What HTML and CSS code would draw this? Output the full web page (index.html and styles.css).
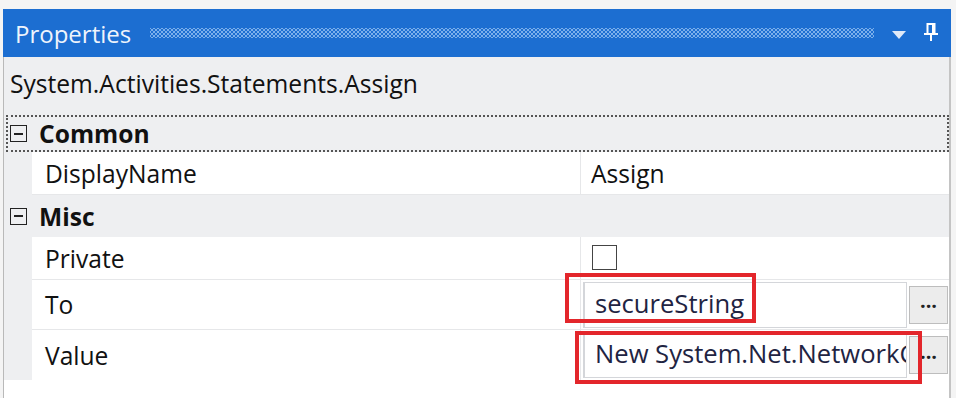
FILE: index.html
```html
<!DOCTYPE html>
<html lang="en">
<head>
    <meta charset="UTF-8">
    <title>Properties</title>
    <link rel="stylesheet" href="styles.css">
</head>
<body>

    <div class="window">
        <!-- Title bar -->
        <div class="titlebar">
            <span class="title">Properties</span>
            <span class="grip"></span>
            <svg class="tb-icon arrow" width="14" height="9" viewBox="0 0 14 9">
                <polygon points="0,0 14,0 7,8" fill="#dfe9f7"/>
            </svg>
            <svg class="tb-icon pin" width="16" height="18" viewBox="0 0 16 18">
                <path d="M4.5 1 H11.5 V11 H4.5 Z" fill="none" stroke="#fff" stroke-width="2"/>
                <rect x="9" y="1" width="2.5" height="10" fill="#fff"/>
                <rect x="1" y="10" width="14" height="2" fill="#fff"/>
                <rect x="7" y="11" width="2" height="7" fill="#fff"/>
            </svg>
        </div>

        <div class="body">
            <div class="typename">System.Activities.Statements.Assign</div>

            <!-- Common -->
            <div class="category focused">
                <span class="toggle"></span>
                <span class="cat-name">Common</span>
            </div>
            <div class="prop">
                <div class="name">DisplayName</div>
                <div class="value">Assign</div>
            </div>

            <!-- Misc -->
            <div class="category">
                <span class="toggle"></span>
                <span class="cat-name">Misc</span>
            </div>
            <div class="prop">
                <div class="name">Private</div>
                <div class="value"><span class="checkbox"></span></div>
            </div>
            <div class="prop tall">
                <div class="name">To</div>
                <div class="value editor">
                    <div class="textbox">secureString</div>
                    <button class="dots">...</button>
                    <div class="mark mark-to"></div>
                </div>
            </div>
            <div class="prop tall last">
                <div class="name">Value</div>
                <div class="value editor">
                    <div class="textbox">New System.Net.NetworkCredential</div>
                    <button class="dots">...</button>
                    <div class="mark mark-value"></div>
                </div>
            </div>

            <div class="footer"></div>
        </div>
    </div>

</body>
</html>
```

FILE: styles.css
```css
body {
    margin: 0;
    background-color: #f4f4f4;
    font-family: "Open Sans", "Noto Sans", sans-serif;
    font-size: 24.6px;
    color: #111;
}

.window {
    margin: 9px 0 0 3px;
    width: 948px;
}

/* Title bar */
.titlebar {
    background-color: #1c6ed1;
    height: 48px;
    display: flex;
    align-items: center;
    padding: 0 12px 0 12px;
}

.title {
    color: #eef4fc;
    font-size: 24px;
    width: 135px;
}

.grip {
    flex: 1;
    height: 10px;
    margin-right: 18px;
    background-image:
        radial-gradient(circle, rgba(160, 200, 245, 0.75) 0.7px, transparent 0.9px),
        radial-gradient(circle, rgba(160, 200, 245, 0.75) 0.7px, transparent 0.9px);
    background-size: 4px 4px;
    background-position: 0 0, 2px 2px;
}

.tb-icon {
    display: block;
}

.arrow {
    margin: 4px 17px 0 0;
}

.pin {
    margin-top: -2px;
}

/* Body */
.body {
    background-color: #eeeff1;
    border-left: 1px solid #b9b9b9;
    border-right: 2px solid #c4c4c4;
}

.typename {
    height: 58px;
    line-height: 54px;
    padding-left: 6px;
}

.category {
    height: 37px;
    display: flex;
    align-items: center;
    box-sizing: border-box;
    padding-left: 2px;
    border: 2px dotted transparent;
    margin-left: 2px;
}

.category.focused {
    border-color: #555;
}

.category:not(.focused) {
    height: 42px;
}

.toggle {
    width: 15px;
    height: 15px;
    border: 1.5px solid #222;
    position: relative;
    margin-right: 12px;
}

.toggle::after {
    content: "";
    position: absolute;
    left: 3px;
    right: 3px;
    top: 6.5px;
    height: 2px;
    background-color: #222;
}

.cat-name {
    font-weight: bold;
}

/* Property rows */
.prop {
    margin-left: 28px;
    background-color: #fff;
    display: grid;
    grid-template-columns: 548px 1fr;
    box-sizing: border-box;
    height: 43px;
    border-bottom: 1px solid #e6e7e9;
}

.prop.tall {
    height: 50px;
}

.prop.last {
    border-bottom: none;
}

.name {
    padding-left: 13px;
    display: flex;
    align-items: center;
}

.value {
    border-left: 1px solid #e6e7e9;
    display: flex;
    align-items: center;
    padding-left: 10px;
}

.checkbox {
    width: 23px;
    height: 23px;
    border: 1.5px solid #444;
    margin: 0 0 2px 1px;
}

.editor {
    padding-left: 2px;
    position: relative;
    color: #1f2442;
    font-size: 25.6px;
}

.textbox {
    width: 311px;
    height: 44px;
    border: 1px solid #d4d6da;
    border-left-width: 2px;
    line-height: 42px;
    padding-left: 10px;
    white-space: nowrap;
    overflow: hidden;
    background-color: #fff;
}

.dots {
    width: 39px;
    height: 38px;
    margin-left: 2px;
    border: 1px solid #bdbdbd;
    background-color: #ececec;
    font-family: inherit;
    font-size: 20px;
    font-weight: bold;
    color: #222;
    padding: 0 0 8px 0;
}

/* Red highlight boxes */
.mark {
    position: absolute;
    border: 4px solid #e3262b;
}

.mark-to {
    left: -16px;
    top: -7px;
    width: 183px;
    height: 42px;
}

.mark-value {
    left: -6px;
    top: 1px;
    width: 339px;
    height: 45px;
}

.footer {
    height: 18px;
    background-color: #fff;
}
```
